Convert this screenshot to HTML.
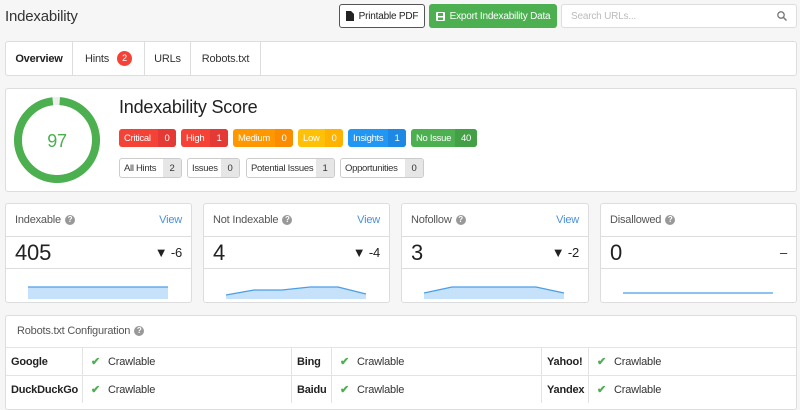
<!DOCTYPE html>
<html><head><style>
*{box-sizing:border-box;margin:0;padding:0}
body{width:800px;height:405px;background:#f6f6f6;font-family:"Liberation Sans",sans-serif;color:#333;position:relative;overflow:hidden;font-size:11px;letter-spacing:-0.2px}
.abs{position:absolute}
.panel{position:absolute;background:#fff;border:1px solid #ddd;border-radius:3px}
.btn{position:absolute;height:24px;border-radius:3px;font-size:10px;display:flex;align-items:center;justify-content:center;gap:5px;white-space:nowrap}
.tab{position:absolute;top:0;height:33px;display:flex;align-items:center;justify-content:center;border-right:1px solid #ddd;font-size:11px}
.b{position:absolute;height:18px;border-radius:3px;color:#fff;font-size:9.5px;display:flex;align-items:center;justify-content:space-between;overflow:hidden;white-space:nowrap;letter-spacing:-0.3px}
.b span{padding-left:5px}
.b i{font-style:normal;height:100%;display:flex;align-items:center;justify-content:center;width:18px;flex:none}
.g{position:absolute;height:20px;border:1px solid #ccc;border-radius:3px;background:#fff;font-size:9.5px;display:flex;align-items:center;justify-content:space-between;overflow:hidden;color:#333;white-space:nowrap;letter-spacing:-0.3px}
.g span{padding-left:4px}
.g i{font-style:normal;background:#e6e6e6;height:100%;width:18px;display:flex;align-items:center;justify-content:center;flex:none}
.q{display:inline-block;width:10px;height:10px;border-radius:50%;background:#999;color:#fff;font-size:8px;text-align:center;line-height:10px;font-weight:bold;vertical-align:middle;margin-left:4px}
.card .h{position:absolute;left:0;right:0;top:0;height:33px;border-bottom:1px solid #ddd;padding:0 9px;display:flex;align-items:center;justify-content:space-between;font-size:11px;color:#555}
.card .n{position:absolute;left:0;right:0;top:33px;height:32px;border-bottom:1px solid #ddd;padding:0 9px;display:flex;align-items:center;justify-content:space-between;font-size:22px;color:#222}
.card .n small{font-size:13px}
.card svg{position:absolute;left:0;top:66px}
.view{color:#4a90d9}
.row{position:absolute;left:0;right:0;height:28px;border-top:1px solid #e3e3e3;font-size:11px}
.row div{position:absolute;top:0;height:27px;display:flex;align-items:center;padding-left:5px}
.row .l{font-weight:bold;color:#222}
.ck{color:#4caf50;margin:0 8px 0 3px;font-weight:bold}
.sep{border-left:1px solid #e3e3e3}
</style></head><body>
<div class="abs" style="left:5px;top:8px;font-size:15px;color:#333">Indexability</div>
<div class="btn" style="left:339px;top:4px;width:86px;border:1px solid #555;background:#fff;color:#222"><svg width="8" height="10"><path d="M0 0h5l3 3v7H0z" fill="#222"/></svg>Printable PDF</div>
<div class="btn" style="left:429px;top:4px;width:128px;background:#4caf50;color:#fff"><svg width="9" height="9"><rect x="0" y="0" width="9" height="9" rx="1" fill="#fff"/><rect x="2" y="1" width="5" height="3" fill="#4caf50"/><rect x="2" y="5.5" width="5" height="2.5" fill="#4caf50"/></svg>Export Indexability Data</div>
<div class="btn" style="left:561px;top:4px;width:236px;border:1px solid #ddd;background:#fff;color:#bbb;justify-content:space-between;padding:0 9px">Search URLs...<svg width="10" height="10"><circle cx="4" cy="4" r="3.2" stroke="#777" stroke-width="1.3" fill="none"/><path d="M6.5 6.5L9.5 9.5" stroke="#777" stroke-width="1.4"/></svg></div>

<div class="panel" style="left:5px;top:41px;width:792px;height:35px">
<div class="tab" style="left:0;width:67px;font-weight:bold;color:#222">Overview</div>
<div class="tab" style="left:67px;width:72px">Hints<span style="display:inline-block;width:15px;height:15px;border-radius:50%;background:#f44336;color:#fff;font-size:9px;text-align:center;line-height:15px;margin-left:8px">2</span></div>
<div class="tab" style="left:139px;width:46px">URLs</div>
<div class="tab" style="left:185px;width:70px">Robots.txt</div>
</div>

<div class="panel" style="left:5px;top:88px;width:792px;height:104px">
<svg class="abs" style="left:6px;top:6px" width="90" height="90"><circle cx="45" cy="45" r="39" stroke="#eee" stroke-width="8" fill="none"/><circle cx="45" cy="45" r="39" stroke="#4caf50" stroke-width="8" fill="none" stroke-dasharray="237.7 245" transform="rotate(-86 45 45)"/><text x="45" y="52" font-size="18" text-anchor="middle" fill="#4caf50" font-family="Liberation Sans">97</text></svg>
<div class="abs" style="left:113px;top:8px;font-size:18px;color:#222">Indexability Score</div>
<div class="b" style="left:113px;top:40px;width:57px;background:#f44336"><span>Critical</span><i style="background:#e53935">0</i></div>
<div class="b" style="left:175px;top:40px;width:47px;background:#f44336"><span>High</span><i style="background:#e53935">1</i></div>
<div class="b" style="left:227px;top:40px;width:60px;background:#ff9800"><span>Medium</span><i style="background:#fb8c00">0</i></div>
<div class="b" style="left:292px;top:40px;width:45px;background:#ffc107"><span>Low</span><i style="background:#ffb300">0</i></div>
<div class="b" style="left:342px;top:40px;width:58px;background:#2196f3"><span>Insights</span><i style="background:#1e88e5">1</i></div>
<div class="b" style="left:405px;top:40px;width:66px;background:#4caf50"><span>No Issue</span><i style="background:#43a047;width:22px">40</i></div>
<div class="g" style="left:113px;top:69px;width:63px"><span>All Hints</span><i>2</i></div>
<div class="g" style="left:181px;top:69px;width:53px"><span>Issues</span><i>0</i></div>
<div class="g" style="left:240px;top:69px;width:89px"><span>Potential Issues</span><i>1</i></div>
<div class="g" style="left:334px;top:69px;width:84px"><span>Opportunities</span><i>0</i></div>
</div>

<div class="panel card" style="left:5px;top:203px;width:187px;height:100px"><div class="h"><span>Indexable<span class="q">?</span></span><span class="view">View</span></div><div class="n"><span>405</span><small>▼ -6</small></div>
<svg width="187" height="33"><path d="M22 17H162V29H22z" fill="#c6e2fa"/><path d="M22 17H162" stroke="#4a9ee8" stroke-width="1.2"/></svg></div>
<div class="panel card" style="left:203px;top:203px;width:187px;height:100px"><div class="h"><span>Not Indexable<span class="q">?</span></span><span class="view">View</span></div><div class="n"><span>4</span><small>▼ -4</small></div>
<svg width="187" height="33"><path d="M22 25L50 20H78L106 17H134L162 24V29H22z" fill="#c6e2fa"/><path d="M22 25L50 20H78L106 17H134L162 24" stroke="#4a9ee8" stroke-width="1.2" fill="none"/></svg></div>
<div class="panel card" style="left:401px;top:203px;width:188px;height:100px"><div class="h"><span>Nofollow<span class="q">?</span></span><span class="view">View</span></div><div class="n"><span>3</span><small>▼ -2</small></div>
<svg width="188" height="33"><path d="M22 23L50 17H134L162 23V29H22z" fill="#c6e2fa"/><path d="M22 23L50 17H134L162 23" stroke="#4a9ee8" stroke-width="1.2" fill="none"/></svg></div>
<div class="panel card" style="left:600px;top:203px;width:197px;height:100px"><div class="h"><span>Disallowed<span class="q">?</span></span><span></span></div><div class="n"><span>0</span><small>–</small></div>
<svg width="197" height="33"><path d="M22 23H172" stroke="#4a9ee8" stroke-width="1.2"/></svg></div>

<div class="panel" style="left:5px;top:315px;width:792px;height:95px">
<div class="abs" style="left:11px;top:9px;font-size:11px;color:#555">Robots.txt Configuration<span class="q">?</span></div>
<div class="row" style="top:31px">
<div class="l" style="left:0">Google</div><div class="sep" style="left:76px"><span class="ck">✔</span>Crawlable</div>
<div class="l sep" style="left:285px">Bing</div><div class="sep" style="left:325px"><span class="ck">✔</span>Crawlable</div>
<div class="l sep" style="left:535px">Yahoo!</div><div class="sep" style="left:582px"><span class="ck">✔</span>Crawlable</div></div>
<div class="row" style="top:59px">
<div class="l" style="left:0">DuckDuckGo</div><div class="sep" style="left:76px"><span class="ck">✔</span>Crawlable</div>
<div class="l sep" style="left:285px">Baidu</div><div class="sep" style="left:325px"><span class="ck">✔</span>Crawlable</div>
<div class="l sep" style="left:535px">Yandex</div><div class="sep" style="left:582px"><span class="ck">✔</span>Crawlable</div></div>
</div>
</body></html>
